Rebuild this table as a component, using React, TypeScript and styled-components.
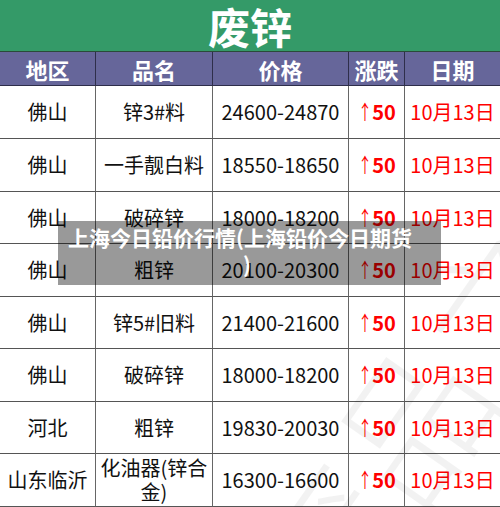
import React from "react";
import styled, { createGlobalStyle } from "styled-components";

const Global = createGlobalStyle`
  html, body { margin: 0; padding: 0; background: #ffffff; }
  body { font-family: "Noto Sans CJK SC", "Noto Sans", sans-serif; }
`;

const Page = styled.div`
  position: relative;
  width: 500px;
  height: 507px;
  overflow: hidden;
  background: #fff;
`;

const Title = styled.div`
  height: 52px;
  box-sizing: border-box;
  background: #349a68;
  color: #fff;
  font-size: 42px;
  font-weight: 700;
  line-height: 50px;
  display: flex;
  align-items: center;
  justify-content: center;
  border-bottom: 1px solid #2a4a3a;
`;

const Grid = styled.div`
  display: grid;
  grid-template-columns: 96px 117px 136px 56px 95px;
`;

const HeadCell = styled.div<{ $last?: boolean }>`
  height: 34px;
  box-sizing: border-box;
  background: #66669a;
  color: #fff;
  font-size: 22px;
  font-weight: 700;
  display: flex;
  align-items: center;
  justify-content: center;
  border-right: ${(p) => (p.$last ? "none" : "1px solid #2e2e4a")};
  border-bottom: 1px solid #2e2e4a;
`;

const Cell = styled.div<{ $h: number; $last?: boolean; $tone?: "up" | "date" }>`
  height: ${(p) => p.$h}px;
  box-sizing: border-box;
  display: flex;
  align-items: center;
  justify-content: center;
  text-align: center;
  font-size: 20px;
  line-height: 24px;
  color: ${(p) => (p.$tone ? "#ff0000" : "#111")};
  font-weight: ${(p) => (p.$tone === "up" ? 700 : 400)};
  border-right: ${(p) => (p.$last ? "none" : "1px solid #666")};
  border-bottom: 1px solid #555;
  white-space: normal;
`;

const Arrow = styled.span`
  font-weight: 400;
  display: inline-block;
  transform: scaleX(0.7);
  margin: 0 -3px 0 -2px;
`;

const Overlay = styled.div`
  position: absolute;
  left: 58px;
  top: 221px;
  width: 383px;
  height: 64px;
  background: rgba(0, 0, 0, 0.4);
  color: #fff;
  font-size: 21px;
  font-weight: 700;
  line-height: 27px;
  padding: 3px 0 0 10px;
  box-sizing: border-box;
`;

const OverlayLine = styled.div<{ $indent?: number }>`
  white-space: nowrap;
  padding-left: ${(p) => p.$indent ?? 0}px;
`;

const Watermark = styled.div`
  position: absolute;
  left: 150px;
  top: 250px;
  font-size: 150px;
  font-weight: 300;
  color: rgba(0, 0, 0, 0.05);
  transform: rotate(-55deg);
  transform-origin: center;
  white-space: nowrap;
  pointer-events: none;
`;

const rows = [
  ["佛山", "锌3#料", "24600-24870"],
  ["佛山", "一手靓白料", "18550-18650"],
  ["佛山", "破碎锌", "18000-18200"],
  ["佛山", "粗锌", "20100-20300"],
  ["佛山", "锌5#旧料", "21400-21600"],
  ["佛山", "破碎锌", "18000-18200"],
  ["河北", "粗锌", "19830-20030"],
  ["山东临沂", "化油器(锌合金)", "16300-16600"],
];

const heights = [53, 53, 52, 53, 52, 53, 52, 53];

export default function App() {
  return (
    <Page>
      <Global />
      <Title>废锌</Title>
      <Grid>
        <HeadCell>地区</HeadCell>
        <HeadCell>品名</HeadCell>
        <HeadCell>价格</HeadCell>
        <HeadCell>涨跌</HeadCell>
        <HeadCell $last>日期</HeadCell>
        {rows.map((r, i) => (
          <React.Fragment key={i}>
            <Cell $h={heights[i]}>{r[0]}</Cell>
            <Cell $h={heights[i]}>{r[1]}</Cell>
            <Cell $h={heights[i]}>{r[2]}</Cell>
            <Cell $h={heights[i]} $tone="up">
              <Arrow>↑</Arrow>50
            </Cell>
            <Cell $h={heights[i]} $tone="date" $last>10月13日</Cell>
          </React.Fragment>
        ))}
      </Grid>
      <Watermark>废品之家</Watermark>
      <Overlay>
        <OverlayLine>上海今日铅价行情(上海铅价今日期货</OverlayLine>
        <OverlayLine $indent={175}>)</OverlayLine>
      </Overlay>
    </Page>
  );
}
